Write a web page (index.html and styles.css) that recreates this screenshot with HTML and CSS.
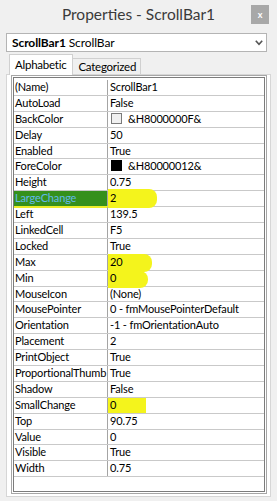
FILE: index.html
```html
<!DOCTYPE html>
<html lang="en">
<head>
  <meta charset="UTF-8" />
  <meta name="viewport" content="width=device-width, initial-scale=1.0"/>
  <title>Properties - ScrollBar1</title>
  <link rel="stylesheet" href="styles.css">
</head>
<body>
  <div class="titlebar">
    <span></span>
    <h1 class="title">Properties - ScrollBar1</h1>
    <button class="close">x</button>
  </div>

  <div class="combo">
    <b>ScrollBar1</b>&nbsp;ScrollBar
    <svg class="chevron" width="8" height="6" viewBox="0 0 8 6">
      <polyline points="0.8,0.8 4,4.4 7.2,0.8" fill="none" stroke="#555" stroke-width="1.6"/>
    </svg>
  </div>

  <div class="tabs">
    <div class="tab active">Alphabetic</div>
    <div class="tab">Categorized</div>
  </div>

  <div class="panel">
    <div class="frame">
      <div class="grid">
        <div class="row"><div class="name">(Name)</div><div class="val">ScrollBar1</div></div>
        <div class="row"><div class="name">AutoLoad</div><div class="val">False</div></div>
        <div class="row"><div class="name">BackColor</div><div class="val"><span class="swatch light"></span>&amp;H8000000F&amp;</div></div>
        <div class="row"><div class="name">Delay</div><div class="val">50</div></div>
        <div class="row"><div class="name">Enabled</div><div class="val">True</div></div>
        <div class="row"><div class="name">ForeColor</div><div class="val"><span class="swatch dark"></span>&amp;H80000012&amp;</div></div>
        <div class="row"><div class="name">Height</div><div class="val">0.75</div></div>
        <div class="row"><div class="name selected">LargeChange</div><div class="val hl hl-long">2</div></div>
        <div class="row"><div class="name">Left</div><div class="val">139.5</div></div>
        <div class="row"><div class="name">LinkedCell</div><div class="val">F5</div></div>
        <div class="row"><div class="name">Locked</div><div class="val">True</div></div>
        <div class="row"><div class="name">Max</div><div class="val hl hl-mid">20</div></div>
        <div class="row"><div class="name">Min</div><div class="val hl hl-short">0</div></div>
        <div class="row"><div class="name">MouseIcon</div><div class="val">(None)</div></div>
        <div class="row"><div class="name">MousePointer</div><div class="val">0 - fmMousePointerDefault</div></div>
        <div class="row"><div class="name">Orientation</div><div class="val">-1 - fmOrientationAuto</div></div>
        <div class="row"><div class="name">Placement</div><div class="val">2</div></div>
        <div class="row"><div class="name">PrintObject</div><div class="val">True</div></div>
        <div class="row"><div class="name">ProportionalThumb</div><div class="val">True</div></div>
        <div class="row"><div class="name">Shadow</div><div class="val">False</div></div>
        <div class="row"><div class="name">SmallChange</div><div class="val hl hl-flat">0</div></div>
        <div class="row"><div class="name">Top</div><div class="val">90.75</div></div>
        <div class="row"><div class="name">Value</div><div class="val">0</div></div>
        <div class="row"><div class="name">Visible</div><div class="val">True</div></div>
        <div class="row"><div class="name">Width</div><div class="val">0.75</div></div>
      </div>
    </div>
  </div>
</body>
</html>
```

FILE: styles.css
```css
body {
  margin: 0;
  font-family: Lato, 'Liberation Sans', sans-serif;
  background: #f0f0f0;
  color: #000;
}

.titlebar {
  display: grid;
  grid-template-columns: 1fr auto 1fr;
  align-items: start;
  height: 30px;
  box-sizing: border-box;
  padding-top: 5px;
}

.title {
  margin: 0;
  font-size: 15.5px;
  font-weight: normal;
  line-height: 19px;
  color: #3a3a3a;
}

.close {
  justify-self: end;
  margin-right: 8px;
  width: 18px;
  height: 19px;
  padding: 0;
  border: none;
  background: #a8a8a8;
  color: #fff;
  font-family: inherit;
  font-size: 9px;
  font-weight: bold;
  line-height: 19px;
}

.combo {
  display: flex;
  align-items: center;
  margin: 3px 10px 0 6px;
  height: 17px;
  padding-left: 5px;
  border: 1px solid #b4b4b4;
  background: #fff;
  font-size: 12px;
  letter-spacing: -0.1px;
  line-height: 17px;
  white-space: nowrap;
}

.chevron {
  margin-left: auto;
  margin-right: 3px;
}

.tabs {
  display: flex;
  align-items: flex-end;
  margin: 2px 0 -1px 9px;
  position: relative;
  z-index: 1;
}

.tab {
  height: 15px;
  margin-bottom: 1px;
  padding: 0 4px 0 5px;
  border: 1px solid #d0d0d0;
  border-left: none;
  border-bottom: none;
  background: #f0f0f0;
  font-size: 11.5px;
  letter-spacing: -0.25px;
  line-height: 16px;
}

.tab.active {
  height: 20px;
  margin-bottom: 0;
  padding-right: 6px;
  border-left: 1px solid #d0d0d0;
  background: #fff;
  line-height: 19px;
}

.panel {
  display: flex;
  flex-direction: column;
  margin: 0 6px;
  height: 419px;
  padding: 0 3px 2px 4px;
  border: 1px solid #d6d6d6;
  background: #fff;
}

.frame {
  flex: 1;
  display: flex;
  padding: 1px;
  border: 1px solid #a6a6a6;
}

.grid {
  flex: 1;
  padding-top: 2px;
  border: 1px solid #7c7c7c;
}

.row {
  display: grid;
  grid-template-columns: 94px 1fr;
  height: 15.9px;
  box-sizing: border-box;
  border-bottom: 1px solid #c9c9c9;
  font-size: 11px;
  letter-spacing: -0.15px;
  line-height: 13px;
  white-space: nowrap;
}

.name {
  padding-left: 1px;
  border-right: 1px solid #a4a4a4;
  overflow: hidden;
}

.val {
  position: relative;
  display: flex;
  align-items: flex-start;
  padding-left: 2px;
}

.name.selected {
  background: #35901c;
  color: #62b8ea;
  box-shadow: 0 2px 0 #eded2a;
}

/* yellow marker strokes */
.hl {
  z-index: 0;
}

.hl::before {
  content: "";
  position: absolute;
  left: 0;
  top: -2px;
  bottom: -2px;
  background: #f4f41c;
  border-radius: 0 8px 8px 0;
  z-index: -1;
}

.hl-long::before { width: 49px; }
.hl-mid::before { width: 44px; top: -1px; }
.hl-short::before { width: 40px; top: 0; }
.hl-flat::before { width: 38px; top: 0; bottom: 0; border-radius: 0; }

.swatch {
  display: inline-block;
  width: 9px;
  height: 9px;
  margin: 1px 6px 0 1px;
  border: 1px solid #7a7a7a;
}

.swatch.light {
  background: #f0f0f0;
}

.swatch.dark {
  background: #000;
  border-color: #000;
}
```
